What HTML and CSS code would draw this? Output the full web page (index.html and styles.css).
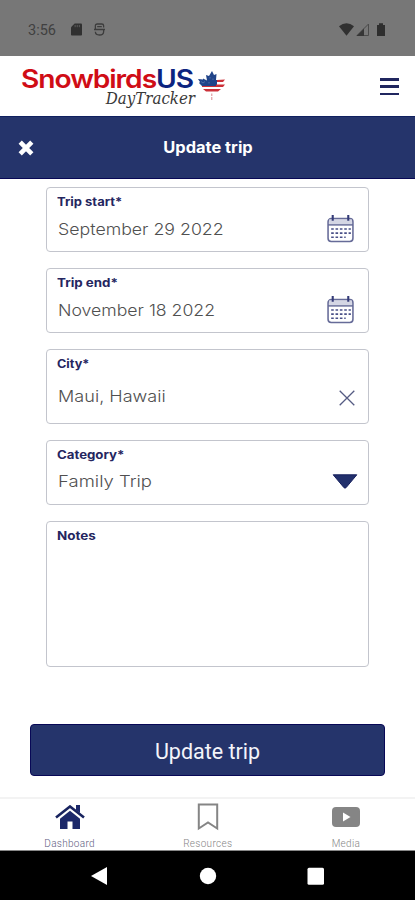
FILE: index.html
```html
<!DOCTYPE html>
<html lang="en">
<head>
<meta charset="utf-8">
<title>Update trip</title>
<link rel="stylesheet" href="styles.css">
</head>
<body>
<div class="screen">
  <div class="status">
    <span class="time">3:56</span>
    <svg class="sd" viewBox="0 0 12 14"><path d="M4 .5h7a1 1 0 0 1 1 1v11a1 1 0 0 1-1 1H1a1 1 0 0 1-1-1V4.500z" fill="#303030"/><path d="M4.500 2v2.500M6.800 2v2.500M9.100 2v2.500" stroke="#666" stroke-width=".9"/></svg>
    <svg class="face" viewBox="0 0 12 14" fill="none" stroke="#3c3c3c" stroke-width="1.400"><path d="M1.500 4.800V3Q1.500 1 3.500 1h5q2 0 2 2v1.800M3.500 3.800h5M0 7h12M1.500 9.500Q1.500 13 6 13t4.500-3.500V7M1.500 4.500V7"/></svg>
    <span class="grow"></span>
    <svg class="signals" viewBox="0 0 47 14"><path d="M0 3.200Q7.500-2.500 15 3.200L7.500 12.800z" fill="#303030"/><path d="M18 12.500L29.500 1v11.500z" fill="none" stroke="#4b4b4b"/><path d="M17.500 13L25 5.500V13z" fill="#363636"/><path d="M38 2h2V.3h4V2h2v11h-8z" fill="#2e2e2e"/></svg>
  </div>
  <header class="brand">
    <div class="logo">
      <div class="name"><span class="red">Snowbirds</span><span class="us">US</span></div>
      <div class="tracker">DayTracker</div>
    </div>
    <svg class="leaf" viewBox="0 0 28 30"><path fill="#204489" d="M14 0l2 4 2.500-1-.5 6h1v6H4l-3-3 1-1-2-3 5 .5v-1l4 2L8 4l3 1z"/><path fill="#cc3038" d="M19 9l8-.5-2 2.500H19zM18 13.500h9L25 16H4v-1h14zM5 18h18l-3 2.500H8z"/><path fill="#d98a90" d="M13.300 22.500h1V25h-1zM13.300 26h1v3h-1z"/><path d="M3 10.500l2 1.500 2-1.500M12 6v1.500m3 0V9m-4 2v1.500" stroke="#6f8abb" stroke-width=".6" fill="none"/></svg>
    <span class="grow"></span>
    <div class="menu"><i></i><i></i><i></i></div>
  </header>
  <div class="titlebar">
    <svg class="close" viewBox="0 0 16 16"><path d="M2.200 2.200L13.800 13.800M13.800 2.200L2.200 13.800" stroke="#fff" stroke-width="4.600"/></svg>
    <h1>Update trip</h1>
  </div>
  <main class="form">
    <div class="field">
      <label class="l-start">Trip start*</label>
      <div class="value v-start">September 29 2022</div>
      <svg class="cal" viewBox="0 0 26 27"><g fill="none" stroke="#666b98" stroke-width="1.500"><rect x="1" y="3.500" width="24" height="22" rx="3"/><path d="M1 9.500h24"/></g><path d="M2 4.200h22v4.600H2z" fill="#d4d6e4"/><path d="M5.500 0v5.500M20.500 0v5.500" stroke="#343b78" stroke-width="2"/><path d="M4 13.500h19M4 17.500h19M4 21.500h14" stroke="#4a5088" stroke-width="1.500" stroke-dasharray="2.500 1.700"/></svg>
    </div>
    <div class="field">
      <label class="l-end">Trip end*</label>
      <div class="value v-end">November 18 2022</div>
      <svg class="cal" viewBox="0 0 26 27"><g fill="none" stroke="#666b98" stroke-width="1.500"><rect x="1" y="3.500" width="24" height="22" rx="3"/><path d="M1 9.500h24"/></g><path d="M2 4.200h22v4.600H2z" fill="#d4d6e4"/><path d="M5.500 0v5.500M20.500 0v5.500" stroke="#343b78" stroke-width="2"/><path d="M4 13.500h19M4 17.500h19M4 21.500h14" stroke="#4a5088" stroke-width="1.500" stroke-dasharray="2.500 1.700"/></svg>
    </div>
    <div class="field city">
      <label class="l-city">City*</label>
      <div class="value v-city">Maui, Hawaii</div>
      <svg class="clear" viewBox="0 0 16 16"><path d="M.7.7l14.600 14.600M15.300.7L.7 15.300" stroke="#555b83" stroke-width="1.300"/></svg>
    </div>
    <div class="field category">
      <label class="l-cat">Category*</label>
      <div class="value v-cat">Family Trip</div>
      <svg class="caret" viewBox="0 0 26 15"><path d="M1.200.8h23.600L14 13.700q-1 .8-2 0z" fill="#22306c" stroke="#17205f" stroke-linejoin="round"/></svg>
    </div>
    <div class="field notes">
      <label class="l-notes">Notes</label>
    </div>
  </main>
  <button class="submit">Update trip</button>
  <nav class="tabs">
    <div class="tab home">
      <svg viewBox="0 0 30 24"><path d="M1 12.500L15 1.500l14 11" fill="none" stroke="#18235f" stroke-width="2.600"/><path d="M21 0h4v8l-4-3zM15 5.800l10 8V24h-7.500v-7.500h-5V24H5V13.800z" fill="#1c286a"/></svg>
      <span>Dashboard</span>
    </div>
    <div class="tab">
      <svg viewBox="0 0 30 28"><path d="M5.800 1.500h18.400v24L15 19.500l-9.200 6z" fill="none" stroke="#858585" stroke-width="2"/></svg>
      <span>Resources</span>
    </div>
    <div class="tab media">
      <svg viewBox="0 0 30 20"><rect x="1" y="0" width="28" height="20" rx="4" fill="#858585"/><path d="M12 5.500v9l7.500-4.500z" fill="#fff"/></svg>
      <span>Media</span>
    </div>
  </nav>
  <div class="sysnav">
    <svg viewBox="0 0 18 20"><path d="M0 10L16 1v18z" fill="#fff"/></svg>
    <svg viewBox="0 0 18 20"><circle cx="9" cy="10" r="8.200" fill="#fff"/></svg>
    <svg viewBox="0 0 18 20"><rect x=".5" y="1.800" width="16.500" height="17" rx="1.500" fill="#fff"/></svg>
  </div>
</div>
</body>
</html>
```
FILE: styles.css
```css
* { box-sizing: border-box; }
body { margin: 0; background: #fff; font-family: Inter, "Open Sans", sans-serif; }
svg { display: block; flex: none; }
.grow { flex: 1; }
.screen { width: 415px; height: 900px; display: flex; flex-direction: column; overflow: hidden; }
.status { height: 56px; flex: none; background: #777; display: flex; align-items: flex-start; padding: 22px 29px 0 28px; }
.time { font: 400 14.500px/17px Roboto, sans-serif; color: #404040; width: 43px; }
.sd { width: 11px; height: 13px; margin-top: 1px; }
.face { width: 11px; height: 13px; margin: 1px 0 0 12px; }
.signals { width: 47px; height: 14px; margin-top: .5px; }

.brand { height: 60px; flex: none; display: flex; padding: 10px 16px 0 21px; }
.logo { width: 174px; display: flex; flex-direction: column; }
.name { font: 600 25.500px/25px Inter, sans-serif; letter-spacing: -.95px; white-space: nowrap; transform: scaleX(1.105); transform-origin: left; align-self: flex-start; }
.red { color: #d00d16; }
.us { color: #0c2480; }
.tracker { font: italic 400 16px/15px "DejaVu Serif", serif; color: #383838; align-self: flex-end; transform: scaleX(.94); transform-origin: right; }
.leaf { width: 28px; height: 30px; margin: 5px 0 0 3px; }
.menu { width: 19px; height: 17px; margin-top: 12px; display: flex; flex-direction: column; justify-content: space-between; }
.menu i { height: 2.500px; background: #20265f; }

.titlebar { height: 63px; flex: none; background: #25346b; border-top: 1px solid #10205f; border-bottom: 1px solid #080856; display: flex; align-items: center; padding: 0 18px; }
.close { width: 16px; height: 16px; margin-top: 1px; }
h1 { flex: 1; margin: 1px 15px 0 0; text-align: center; font: 700 15.500px/20px Inter, sans-serif; color: #fff; transform: scaleX(1.06); }

.form { height: 545px; flex: none; padding: 8px 46px 0; display: flex; flex-direction: column; gap: 16px; }
.field { height: 65px; flex: none; border: 1px solid #c3c5cd; border-radius: 4px; display: grid; grid-template-columns: 1fr auto; grid-template-rows: 28px 1fr; padding: 0 14px 0 10px; }
.field label { grid-column: 1 / 3; justify-self: start; font: 700 11.800px/16px Inter, sans-serif; color: #25265f; padding-top: 6px; white-space: nowrap; transform-origin: left; }
.value { justify-self: start; font: 300 16.500px/22px Inter, sans-serif; color: #505050; padding: 2px 0 0 1px; white-space: nowrap; transform-origin: left; }
.l-start { transform: scaleX(1.1); }
.l-end { transform: scaleX(1.13); }
.l-city { transform: scaleX(1.07); }
.l-cat { transform: scaleX(1.12); }
.l-notes { transform: scaleX(1.14); }
.v-start { transform: scaleX(1.075); }
.v-end { transform: scaleX(1.07); }
.v-city { transform: scaleX(1.095); }
.v-cat { transform: scaleX(1.12); }
.cal { width: 27px; height: 28px; margin-top: -1px; }
.city { height: 75px; }
.city .value { padding-top: 6.500px; }
.clear { width: 16px; height: 16px; margin: 12px -1px 0 0; }
.category .value { padding-top: 1px; }
.caret { width: 26px; height: 15px; margin: 5px -4px 0 0; }
.notes { height: 146px; }

.submit { width: 355px; height: 52px; flex: none; margin: 0 0 0 30px; border: 1px solid #080856; border-radius: 4px; background: #25346b; color: #f4f4fa; font: 400 21.500px/24px Roboto, sans-serif; padding: 3px 0 0; }
.tabs { height: 54px; flex: none; margin-top: 21px; border-top: 2px solid #f3f3f3; border-bottom: 1px solid #888; display: flex; padding-left: .5px; }
.tab { width: 138.300px; display: flex; flex-direction: column; align-items: center; color: #858585; }
.tab svg { width: 30px; height: 28px; margin-top: 4px; }
.tab span { font: 300 10px/13px Roboto, sans-serif; margin-top: 5.500px; letter-spacing: .3px; }
.tab.home { color: #5c5c80; }
.tab.home svg { height: 24px; margin-top: 6px; }
.tab.home span { margin-top: 7.500px; }
.tab.media svg { height: 20px; margin-top: 8px; }
.tab.media span { margin-top: 9.500px; }
.sysnav { height: 50px; flex: none; background: #000; display: flex; justify-content: center; padding: 14px 0 0; gap: 90px; }
.sysnav svg { width: 18px; height: 20px; margin-top: 1px; }
```
